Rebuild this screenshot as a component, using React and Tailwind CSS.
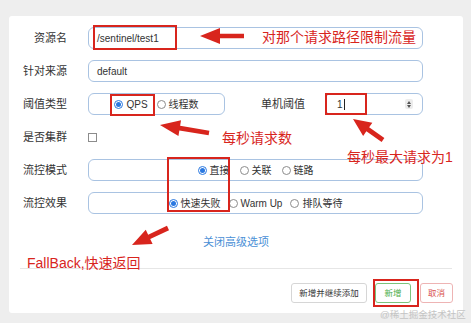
import React from 'react';

const RED = '#d8251d';

function arrowPoints(x1, y1, x2, y2, head = 19, half = 8, shaft = 2.2) {
  const dx = x2 - x1;
  const dy = y2 - y1;
  const len = Math.hypot(dx, dy);
  const ux = dx / len;
  const uy = dy / len;
  const px = -uy;
  const py = ux;
  const bx = x2 - ux * head;
  const by = y2 - uy * head;
  const pts = [
    [x1 + px * shaft, y1 + py * shaft],
    [bx + px * shaft, by + py * shaft],
    [bx + px * half, by + py * half],
    [x2, y2],
    [bx - px * half, by - py * half],
    [bx - px * shaft, by - py * shaft],
    [x1 - px * shaft, y1 - py * shaft],
  ];
  return pts.map((p) => p.join(',')).join(' ');
}

function Radio({ checked, label }) {
  return (
    <span className="flex items-center gap-[3px]">
      {checked ? (
        <span className="flex h-[9px] w-[9px] items-center justify-center rounded-full border border-[#2a78e0] bg-white">
          <span className="h-[5px] w-[5px] rounded-full bg-[#2a78e0]" />
        </span>
      ) : (
        <span className="h-[9px] w-[9px] rounded-full border border-[#8c8c8c] bg-white" />
      )}
      <span>{label}</span>
    </span>
  );
}

function Label({ children }) {
  return <div className="w-[58px] shrink-0 text-right text-[11px] text-[#333]">{children}</div>;
}

const box = 'h-[22px] rounded-[6px] border border-[#a9c3e2] bg-white';

export default function App() {
  return (
    <div className="relative h-[323px] w-[471px] overflow-hidden bg-[#eeeeee] font-['Liberation_Sans','Noto_Sans_CJK_SC',sans-serif] text-[#333]">
      <div className="ml-[9px] mt-[16px] flex h-[297px] w-[454px] flex-col rounded-[3px] bg-white pt-[11px]">
        <div className="flex flex-col gap-[11px]">
          <div className="flex items-center gap-[21px]">
            <Label>资源名</Label>
            <div className={`${box} flex w-[335px] items-center pl-[8px] text-[10px]`}>/sentinel/test1</div>
          </div>
          <div className="flex items-center gap-[21px]">
            <Label>针对来源</Label>
            <div className={`${box} flex w-[335px] items-center pl-[8px] text-[10px]`}>default</div>
          </div>
          <div className="flex items-center gap-[21px]">
            <Label>阈值类型</Label>
            <div className={`${box} flex w-[137px] items-center justify-center gap-[9px] text-[10px]`}>
              <Radio checked label="QPS" />
              <Radio label="线程数" />
            </div>
            <div className="-ml-[21px] flex items-center gap-[20px]">
              <div className="w-[80px] text-right text-[11px]">单机阈值</div>
              <div className={`${box} flex w-[98px] items-center justify-between pl-[11px] pr-[9px] text-[10px]`}>
                <span className="flex items-center">
                  1<span className="ml-[1px] h-[11px] w-px bg-[#222]" />
                </span>
                <span className="flex h-[10px] w-[8px] flex-col items-center justify-center gap-[1px] rounded-[2px] bg-[#ececec]">
                  <span className="h-0 w-0 border-x-[2.5px] border-b-[3px] border-x-transparent border-b-[#555]" />
                  <span className="h-0 w-0 border-x-[2.5px] border-t-[3px] border-x-transparent border-t-[#555]" />
                </span>
              </div>
            </div>
          </div>
          <div className="flex h-[22px] items-center gap-[21px]">
            <Label>是否集群</Label>
            <span className="h-[9px] w-[9px] border border-[#8c8c8c] bg-white" />
          </div>
          <div className="flex items-center gap-[21px]">
            <Label>流控模式</Label>
            <div className={`${box} flex w-[335px] items-center justify-center gap-[10px] text-[10px]`}>
              <Radio checked label="直接" />
              <Radio label="关联" />
              <Radio label="链路" />
            </div>
          </div>
          <div className="flex items-center gap-[21px]">
            <Label>流控效果</Label>
            <div className={`${box} flex w-[335px] items-center justify-center gap-[8px] text-[10px]`}>
              <Radio checked label="快速失败" />
              <Radio label="Warm Up" />
              <Radio label="排队等待" />
            </div>
          </div>
        </div>

        <div className="mt-[21px] text-center text-[11px] leading-[14px] text-[#4a8fd6]">关闭高级选项</div>

        <div className="mx-[11px] mt-[19px] h-px bg-[#e6e6e6]" />

        <div className="mt-[14px] flex justify-end gap-[8px] pr-[10px] text-[8.5px]">
          <div className="flex h-[20px] w-[76px] items-center justify-center rounded-[3px] border border-[#d6d6d6] text-[#333]">新增并继续添加</div>
          <div className="flex h-[20px] w-[36px] items-center justify-center rounded-[3px] border border-[#7cc47c] text-[#4cae4c]">新增</div>
          <div className="ml-[1px] flex h-[20px] w-[33px] items-center justify-center rounded-[3px] border border-[#eeb4b4] text-[#d9534f]">取消</div>
        </div>
      </div>

      {/* annotation frames */}
      <div className="absolute left-[93px] top-[25px] h-[25px] w-[84px] border-2 border-[#d8251d]" />
      <div className="absolute left-[110px] top-[94px] h-[22px] w-[45px] border-2 border-[#d8251d]" />
      <div className="absolute left-[325px] top-[93px] h-[22px] w-[42px] border-2 border-[#d8251d]" />
      <div className="absolute left-[167px] top-[157px] h-[55px] w-[63px] border-2 border-[#d8251d]" />
      <div className="absolute left-[373px] top-[279px] h-[28px] w-[46px] border-2 border-[#d8251d]" />

      <svg className="absolute left-0 top-0" width="471" height="323">
        <polygon points={arrowPoints(244, 36, 200, 36, 20, 8, 2.2)} fill={RED} />
        <polygon points={arrowPoints(209, 133, 160, 125, 20, 8, 2.4)} fill={RED} />
        <polygon points={arrowPoints(383, 140, 353, 119, 18, 8, 2.4)} fill={RED} />
        <polygon points={arrowPoints(168, 228, 132, 245, 19, 8, 2.4)} fill={RED} />
      </svg>

      <div className="absolute left-[262px] top-[28px] text-[14px] leading-[18px] text-[#d8251d]">对那个请求路径限制流量</div>
      <div className="absolute left-[222px] top-[129px] text-[14px] leading-[18px] text-[#d8251d]">每秒请求数</div>
      <div className="absolute left-[347px] top-[148px] text-[14px] leading-[18px] text-[#d8251d]">每秒最大请求为1</div>
      <div className="absolute left-[27px] top-[254px] text-[14px] leading-[18px] text-[#d8251d]">FallBack,快速返回</div>
      <div className="absolute left-[380px] top-[309px] text-[9.5px] leading-[12px] text-[#c4c4c4]">@稀土掘金技术社区</div>
    </div>
  );
}
